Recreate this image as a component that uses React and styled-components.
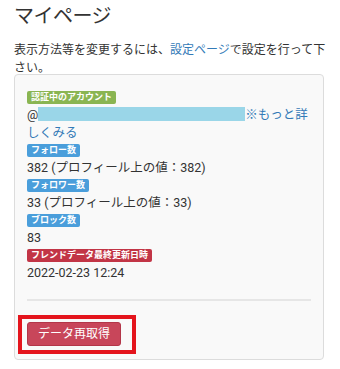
import React from "react";
import styled, { createGlobalStyle } from "styled-components";

const GlobalStyle = createGlobalStyle`
  html, body {
    margin: 0;
    padding: 0;
    background: #fff;
  }
  body {
    font-family: Roboto, "Noto Sans CJK JP", sans-serif;
    color: #333;
    font-size: 12px;
    line-height: 18px;
  }
`;

const Page = styled.div`
  padding: 0 16px 0 14px;
  width: 340px;
  box-sizing: border-box;
`;

const Title = styled.h1`
  margin: 0;
  padding-top: 3px;
  font-size: 20px;
  line-height: 26px;
  font-weight: 400;
  color: #333;
  letter-spacing: -0.5px;
`;

const Intro = styled.p`
  margin: 12px -10px -3px 0;
  font-size: 12px;
  line-height: 18px;
`;

const Link = styled.a`
  color: #337ab7;
  text-decoration: none;
`;

const Card = styled.div`
  border: 1px solid #dcdcdc;
  border-radius: 4px;
  background: #f9f9f9;
  padding: 16px 12px 13px;
`;

const Badge = styled.div`
  display: block;
  width: fit-content;
  font-size: 9px;
  line-height: 9px;
  font-weight: 700;
  color: #fff;
  padding: 2px 4px 2px;
  border-radius: 2px;
  background: ${(p) => p.$color};
`;

const Value = styled.div`
  font-size: 12.5px;
  line-height: 18px;
  margin: 2px 0 2px;
`;

const Masked = styled.span`
  display: inline-block;
  width: 207px;
  height: 14px;
  background: #9ad6e8;
  vertical-align: -2px;
`;

const Divider = styled.hr`
  border: 0;
  border-top: 2px solid #e6e6e6;
  margin: 17px 0 21px;
`;

const Marked = styled.div`
  position: relative;
  width: fit-content;
  &::after {
    content: "";
    position: absolute;
    top: -7px;
    left: -9px;
    right: -15px;
    bottom: -8px;
    border: 4px solid #e4141c;
  }
`;

const Button = styled.button`
  display: block;
  font-family: Roboto, "Noto Sans CJK JP", sans-serif;
  font-size: 12px;
  line-height: 16px;
  color: #fff;
  background: #c8465a;
  border: 1px solid #b33649;
  border-radius: 3px;
  padding: 3px 10px;
  white-space: nowrap;
  height: 24px;
`;

const rows = [
  { label: "フォロー数", color: "#4a9edb", value: "382 (プロフィール上の値：382)" },
  { label: "フォロワー数", color: "#4a9edb", value: "33 (プロフィール上の値：33)" },
  { label: "ブロック数", color: "#4a9edb", value: "83" },
  { label: "フレンドデータ最終更新日時", color: "#c23546", value: "2022-02-23 12:24" },
];

export default function App() {
  return (
    <>
      <GlobalStyle />
      <Page>
        <Title>マイページ</Title>
        <Intro>
          表示方法等を変更するには、<Link href="#">設定ページ</Link>で設定を行って下さい。
        </Intro>
        <Card>
          <Badge $color="#8ab552">認証中のアカウント</Badge>
          <Value>
            @<Masked />
            <Link href="#">※もっと詳しくみる</Link>
          </Value>
          {rows.map((r) => (
            <React.Fragment key={r.label}>
              <Badge $color={r.color}>{r.label}</Badge>
              <Value>{r.value}</Value>
            </React.Fragment>
          ))}
          <Divider />
          <Marked>
            <Button>データ再取得</Button>
          </Marked>
        </Card>
      </Page>
    </>
  );
}
